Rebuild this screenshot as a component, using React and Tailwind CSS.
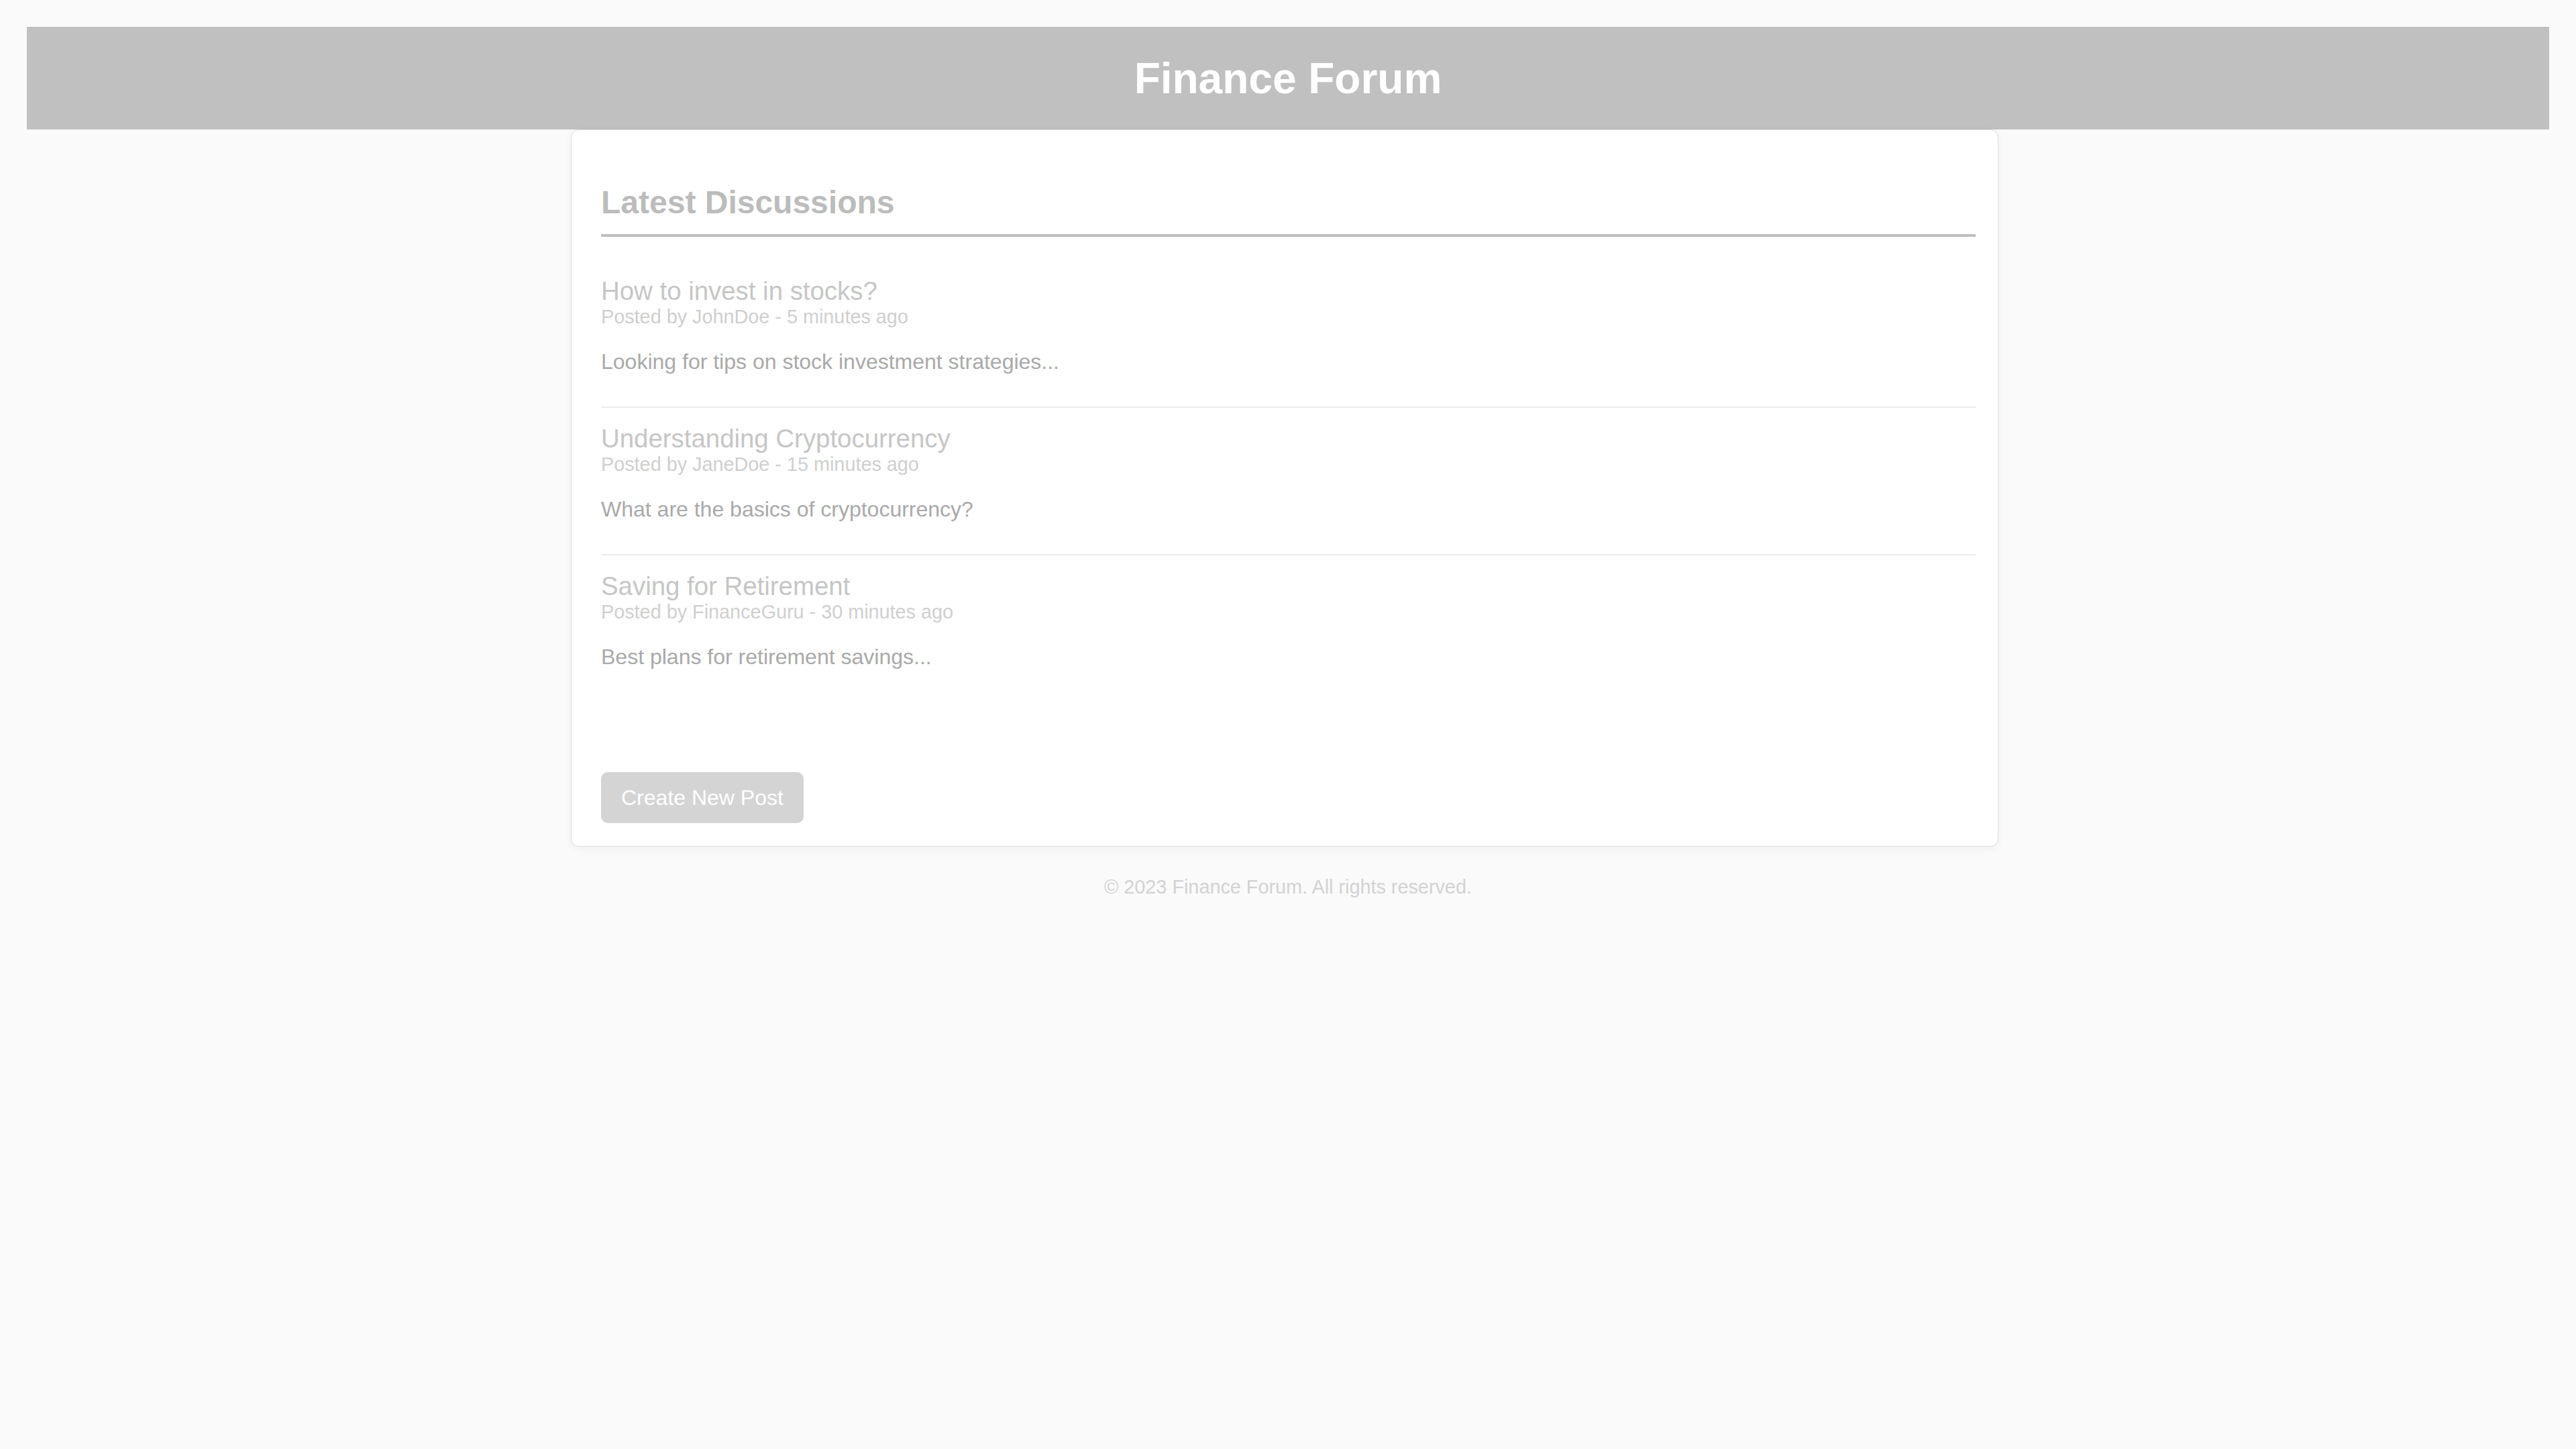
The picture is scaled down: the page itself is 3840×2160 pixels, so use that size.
import React from 'react';

const posts = [
  {
    id: 1,
    title: 'How to invest in stocks?',
    author: 'JohnDoe',
    time: '5 minutes ago',
    body: 'Looking for tips on stock investment strategies...',
  },
  {
    id: 2,
    title: 'Understanding Cryptocurrency',
    author: 'JaneDoe',
    time: '15 minutes ago',
    body: 'What are the basics of cryptocurrency?',
  },
  {
    id: 3,
    title: 'Saving for Retirement',
    author: 'FinanceGuru',
    time: '30 minutes ago',
    body: 'Best plans for retirement savings...',
  },
];

function Post({ post }) {
  return (
    <div className="pt-[24px] pb-[48px] border-b-2 border-[#ebebeb] last:border-b-0">
      <h3 className="text-[38.4px] leading-[44px] font-normal text-[#c6c6c6]">{post.title}</h3>
      <p className="text-[28.8px] leading-[33px] text-[#cfcfcf]">
        Posted by {post.author} - {post.time}
      </p>
      <p className="mt-8 text-[32px] leading-[37px] text-[#a9a9a9]">{post.body}</p>
    </div>
  );
}

export default function App() {
  return (
    <div className="min-h-screen bg-[#fafafa] pt-10 px-10 font-['Liberation_Sans',Arial,sans-serif]">
      {/* Encabezado */}
      <header className="h-[153px] bg-[#c0c0c0] flex items-center justify-center">
        <h1 className="text-[64px] leading-[74px] font-bold text-white">Finance Forum</h1>
      </header>

      {/* Contenido */}
      <main className="w-[2128px] ml-[811px] bg-white border border-[#dedede] rounded-xl shadow-[0_3px_12px_rgba(0,0,0,0.05)] pl-[44px] pr-[33px] pt-[81px] pb-[34px]">
        <h2 className="text-[48px] leading-[54px] font-bold text-[#bcbcbc] pb-[20px] border-b-4 border-[#bdbdbd]">
          Latest Discussions
        </h2>

        <div className="mt-[35px]">
          {posts.map((post) => (
            <Post key={post.id} post={post} />
          ))}
        </div>

        <button className="mt-[105px] px-[30px] py-[20px] text-[32px] leading-[36px] rounded-[10px] bg-[#d4d4d4] text-white">
          Create New Post
        </button>
      </main>

      {/* Pie */}
      <footer className="mt-[44px] text-center text-[28.8px] leading-[33px] text-[#d2d2d2]">
        © 2023 Finance Forum. All rights reserved.
      </footer>
    </div>
  );
}
